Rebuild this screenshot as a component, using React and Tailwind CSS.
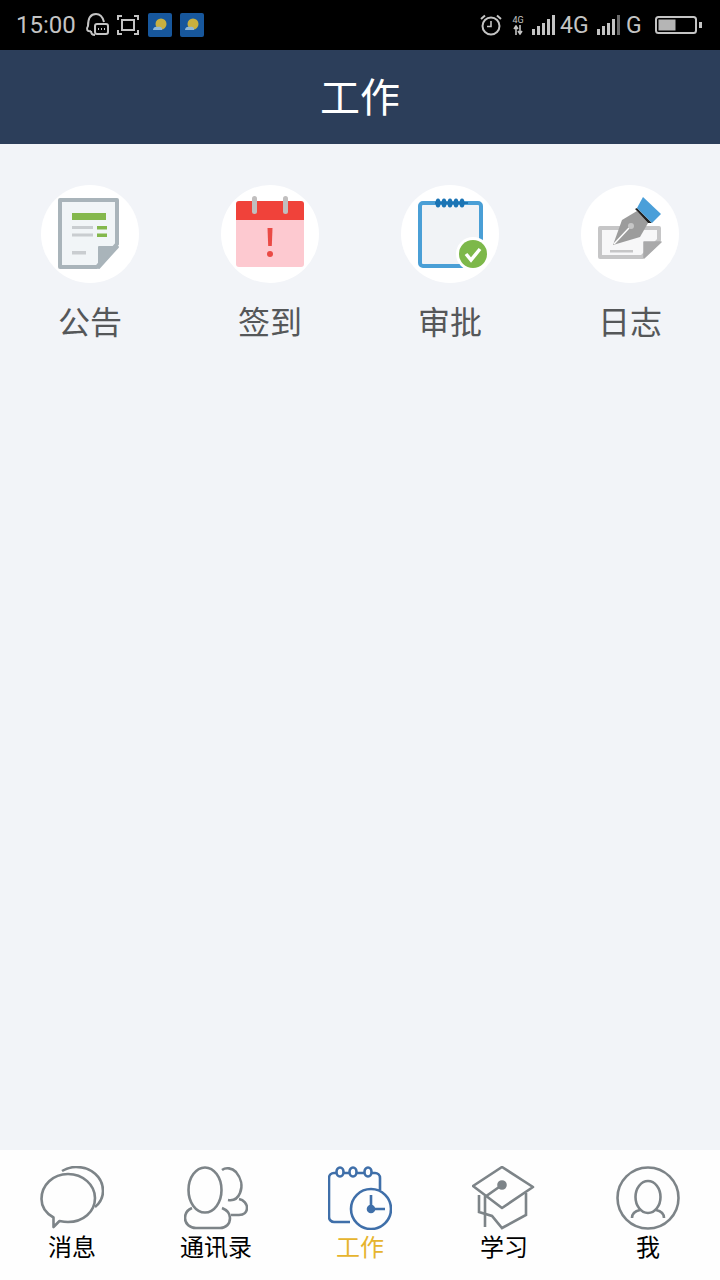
import React from 'react';

const CJK = { fontFamily: '"Noto Sans CJK SC", "Noto Sans", sans-serif' };

// status bar icons
const QqChatIcon = () => (
  <svg width="24" height="26" viewBox="0 0 24 26" fill="none" stroke="#c4c4c4" strokeWidth="2" className="ml-[9px]">
    <path d="M6 19 C2 20 1 17 3 14 C3 8 5 2 11 2 C16 2 18 6 19 10" />
    <path d="M6 19 C6 21 7 23 10 23" />
    <rect x="10" y="12" width="13" height="10" rx="2" fill="#000" />
    <path d="M13 17h1M16 17h1M19 17h1" />
  </svg>
);

const ScanIcon = () => (
  <svg width="24" height="22" viewBox="0 0 24 22" fill="none" stroke="#c4c4c4" strokeWidth="2" className="ml-[7px]">
    <path d="M2 6V2h4M18 2h4v4M22 16v4h-4M6 20H2v-4" />
    <rect x="6" y="6" width="12" height="10" />
  </svg>
);

const WeatherTile = ({ className }) => (
  <svg width="24" height="24" viewBox="0 0 24 24" className={className}>
    <rect width="24" height="24" rx="2" fill="#17579c" />
    <circle cx="13" cy="11" r="5.5" fill="#c9b03f" />
    <path d="M5 17 C5 14 8 13 10 14 C12 13 15 15 14 17 Z" fill="#8fb8d8" />
  </svg>
);

const AlarmIcon = () => (
  <svg width="24" height="24" viewBox="0 0 24 24" fill="none" stroke="#c4c4c4" strokeWidth="2">
    <circle cx="12" cy="13" r="8.5" />
    <path d="M12 8v5.5H8" strokeWidth="1.6" />
    <path d="M2 6l4-3.5M22 6l-4-3.5" />
  </svg>
);

const SignalIcon = ({ last = '#c4c4c4' }) => (
  <svg width="24" height="22" viewBox="0 0 24 22">
    <rect x="0" y="15" width="3" height="6" fill="#c4c4c4" />
    <rect x="5" y="12" width="3" height="9" fill="#c4c4c4" />
    <rect x="10" y="9" width="3" height="12" fill="#c4c4c4" />
    <rect x="15" y="5" width="3" height="16" fill="#c4c4c4" />
    <rect x="20" y="1" width="3" height="20" fill={last} />
  </svg>
);

const NetTiny = () => (
  <div className="flex flex-col items-center ml-[8px] w-[14px] leading-none text-[#c4c4c4]">
    <span className="text-[9px] leading-[10px] font-['Roboto']">4G</span>
    <svg width="12" height="10" viewBox="0 0 12 10" fill="none" stroke="#c4c4c4" strokeWidth="1.6">
      <path d="M4 10V2M2 4l2-3 2 3M8 0v8M6 6l2 3 2-3" />
    </svg>
  </div>
);

const BatteryIcon = () => (
  <svg width="47" height="20" viewBox="0 0 47 20" className="ml-[13px]">
    <rect x="1" y="2" width="40" height="16" rx="2.5" fill="none" stroke="#c4c4c4" strokeWidth="2" />
    <rect x="3.5" y="4.5" width="17" height="11" fill="#b5b5b5" />
    <rect x="44" y="7" width="3" height="6" fill="#c4c4c4" />
  </svg>
);

// grid icons, drawn on the 98px circle
const NoticeIcon = () => (
  <svg width="98" height="98" viewBox="0 0 98 98">
    <path d="M19 15H76V59L56 82H19Z" fill="#f1f5f7" stroke="#a9b4ba" strokeWidth="4" strokeLinejoin="round" />
    <path d="M58 83V62H77Z" fill="#a9b4ba" stroke="#a9b4ba" strokeWidth="2" strokeLinejoin="round" />
    <rect x="31" y="28" width="34" height="7" fill="#84b84c" />
    <rect x="31" y="41" width="21" height="3" fill="#c9cdd0" />
    <rect x="56" y="41" width="10" height="3.5" fill="#84b84c" />
    <rect x="31" y="48.500" width="21" height="3" fill="#c9cdd0" />
    <rect x="56" y="48.500" width="10" height="3.500" fill="#84b84c" />
    <rect x="31" y="66" width="14" height="3.500" fill="#c9cdd0" />
  </svg>
);

const SignIcon = () => (
  <svg width="98" height="98" viewBox="0 0 98 98">
    <path d="M15 35H83V79a3 3 0 0 1-3 3H18a3 3 0 0 1-3-3Z" fill="#fdc9d0" />
    <path d="M18 16H80a3 3 0 0 1 3 3V35H15V19a3 3 0 0 1 3-3Z" fill="#f0423a" />
    <rect x="31" y="11" width="5" height="18" rx="2.500" fill="#c1bfbf" />
    <rect x="62" y="11" width="5" height="18" rx="2.500" fill="#c1bfbf" />
    <path d="M46.500 43H51.500L50.800 61H47.200Z" fill="#ea4a45" />
    <circle cx="49" cy="69" r="3" fill="#ea4a45" />
  </svg>
);

const ApproveIcon = () => (
  <svg width="98" height="98" viewBox="0 0 98 98">
    <path d="M22 18H77a3 3 0 0 1 3 3V78a3 3 0 0 1-3 3H22a3 3 0 0 1-3-3V21a3 3 0 0 1 3-3Z" fill="#f1f3f6" stroke="#4a9fd6" strokeWidth="4" />
    <path d="M34 18H67" stroke="#1b74b4" strokeWidth="2" />
    {[37, 43, 49, 55, 61].map((x) => (
      <ellipse key={x} cx={x} cy="18" rx="2.500" ry="4.500" fill="#1b74b4" />
    ))}
    <circle cx="72" cy="69" r="17" fill="#fff" />
    <circle cx="72" cy="69" r="14" fill="#7db84a" />
    <path d="M65 69l5 6 9-11" fill="none" stroke="#fff" strokeWidth="3.500" />
  </svg>
);

const LogIcon = () => (
  <svg width="98" height="98" viewBox="0 0 98 98">
    <path d="M19 43H78V55L61 72H19Z" fill="#f7f7f8" stroke="#c6c6c7" strokeWidth="4" strokeLinejoin="round" />
    <path d="M63 73V57H80Z" fill="#a9a9aa" stroke="#a9a9aa" strokeWidth="1.500" strokeLinejoin="round" />
    <rect x="29" y="65" width="23" height="2.500" fill="#c6c6c7" />
    <path d="M32 60L41 35L56 26L67 38L59 52Z" fill="#9c9c9c" />
    <path d="M33 59L48 43" stroke="#fff" strokeWidth="1.500" />
    <circle cx="50" cy="41" r="3" fill="#c6c6c6" />
    <path d="M54 24L56 26L67 38L71 38L56 23Z" fill="#222" />
    <path d="M62 12L80 29L71 38L56 23Z" fill="#4a9fd9" />
  </svg>
);

// bottom bar icons, 64px
const MessageIcon = () => (
  <svg width="64" height="64" viewBox="0 0 64 64" fill="none" stroke="#7d8488" strokeWidth="2.600">
    <path d="M13.500 61 L13.500 51.500 C5.500 47 1.500 40 1.500 33 C1.500 19 13 8 28 8 C43 8 55 19 55 32 C55 46 43 56 28 56 C24.500 56 22 55.500 19.500 55 Z" strokeLinejoin="round" />
    <path d="M22 5 C27 2 32 1 36 1 C51 1 63 11 63 25 C63 31 60 37 55 41" />
  </svg>
);

const ContactsIcon = () => (
  <svg width="64" height="64" viewBox="0 0 64 64" fill="none" stroke="#7d8488" strokeWidth="2.600">
    <ellipse cx="21" cy="24" rx="16.500" ry="22.500" />
    <path d="M8 42 C3 44 1 48 1 52 C1 58 6 62 12 62 H36 C42 62 46 58 46 52 C46 48 43 44 38 42" />
    <path d="M38 4 C42 1 48 2 52 6 C57 12 59 20 56 27 C54 32 50 35 44 34" />
    <path d="M55 33 C60 34 63 38 63 42 C63 46 60 49 55 49 H47" />
  </svg>
);

const WorkIcon = () => (
  <svg width="64" height="64" viewBox="0 0 64 64" fill="none" stroke="#3f6fa9" strokeWidth="2.600">
    <path d="M22 56H6 a5 5 0 0 1-5-5V12 a5 5 0 0 1 5-5H8 M16 7H21 M29 7H36 M44 7H47 a5 5 0 0 1 5 5V24" />
    <ellipse cx="12" cy="6" rx="3.500" ry="4.500" />
    <ellipse cx="25" cy="6" rx="3.500" ry="4.500" />
    <ellipse cx="40" cy="6" rx="3.500" ry="4.500" />
    <circle cx="43" cy="43" r="20" />
    <path d="M43 29V40 M47 43H57" />
    <circle cx="43" cy="43" r="3" fill="#3f6fa9" />
  </svg>
);

const StudyIcon = () => (
  <svg width="64" height="64" viewBox="0 0 64 64" fill="none" stroke="#7d8488" strokeWidth="2.600">
    <path d="M1 20L30 1L61 21L30 42Z" strokeLinejoin="round" />
    <path d="M7 29V46L20 50L30 62L54 49V27" />
    <path d="M30 19L13 31V61" />
    <circle cx="30" cy="19" r="3.500" fill="#7d8488" />
  </svg>
);

const MeIcon = () => (
  <svg width="64" height="64" viewBox="0 0 64 64" fill="none" stroke="#7d8488" strokeWidth="2.600">
    <circle cx="32" cy="32" r="30.500" />
    <ellipse cx="32" cy="31" rx="12.500" ry="16" />
    <path d="M16 52 C16 48 19 45 24 44 M48 52 C48 48 45 45 40 44" />
  </svg>
);

const entries = [
  { label: '公告', Icon: NoticeIcon },
  { label: '签到', Icon: SignIcon },
  { label: '审批', Icon: ApproveIcon },
  { label: '日志', Icon: LogIcon },
];

const tabs = [
  { label: '消息', Icon: MessageIcon },
  { label: '通讯录', Icon: ContactsIcon },
  { label: '工作', Icon: WorkIcon, active: true },
  { label: '学习', Icon: StudyIcon },
  { label: '我', Icon: MeIcon },
];

const App = () => {
  return (
    <div className="w-[720px] h-[1280px] flex flex-col bg-[#f2f4f8] overflow-hidden" style={CJK}>
      {/* Status bar */}
      <div className="h-[50px] bg-black flex items-center pl-[16px] pr-[18px] text-[#c4c4c4]">
        <span className="text-[24px] leading-none font-['Roboto'] w-[60px]">15:00</span>
        <QqChatIcon />
        <ScanIcon />
        <WeatherTile className="ml-[8px]" />
        <WeatherTile className="ml-[8px]" />
        <div className="ml-auto flex items-center">
          <AlarmIcon />
          <NetTiny />
          <div className="ml-[7px]"><SignalIcon /></div>
          <span className="ml-[4px] text-[23px] leading-none font-['Roboto'] w-[28px]">4G</span>
          <div className="ml-[9px]"><SignalIcon last="#6a6a6a" /></div>
          <span className="ml-[5px] text-[23px] leading-none font-['Roboto'] w-[16px]">G</span>
          <BatteryIcon />
        </div>
      </div>

      {/* Header */}
      <div className="h-[94px] bg-[#2c3e5a] flex items-center justify-center pb-[4px]">
        <h1 className="text-[40px] leading-none text-white">工作</h1>
      </div>

      {/* Work entries */}
      <div className="flex-1 grid grid-cols-4 content-start pt-[41px]">
        {entries.map(({ label, Icon }) => (
          <div key={label} className="flex flex-col items-center">
            <div className="w-[98px] h-[98px] rounded-full bg-white">
              <Icon />
            </div>
            <span className="mt-[16px] text-[32px] leading-[42px] text-[#555759]">{label}</span>
          </div>
        ))}
      </div>

      {/* Bottom tabs */}
      <div className="h-[130px] bg-[#fefefe] grid grid-cols-5 pt-[16px]">
        {tabs.map(({ label, Icon, active }) => (
          <div key={label} className="flex flex-col items-center">
            <Icon />
            <span className={`text-[24px] leading-[32px] ${active ? 'text-[#e6b42e]' : 'text-black'}`}>{label}</span>
          </div>
        ))}
      </div>
    </div>
  );
};

export default App;
